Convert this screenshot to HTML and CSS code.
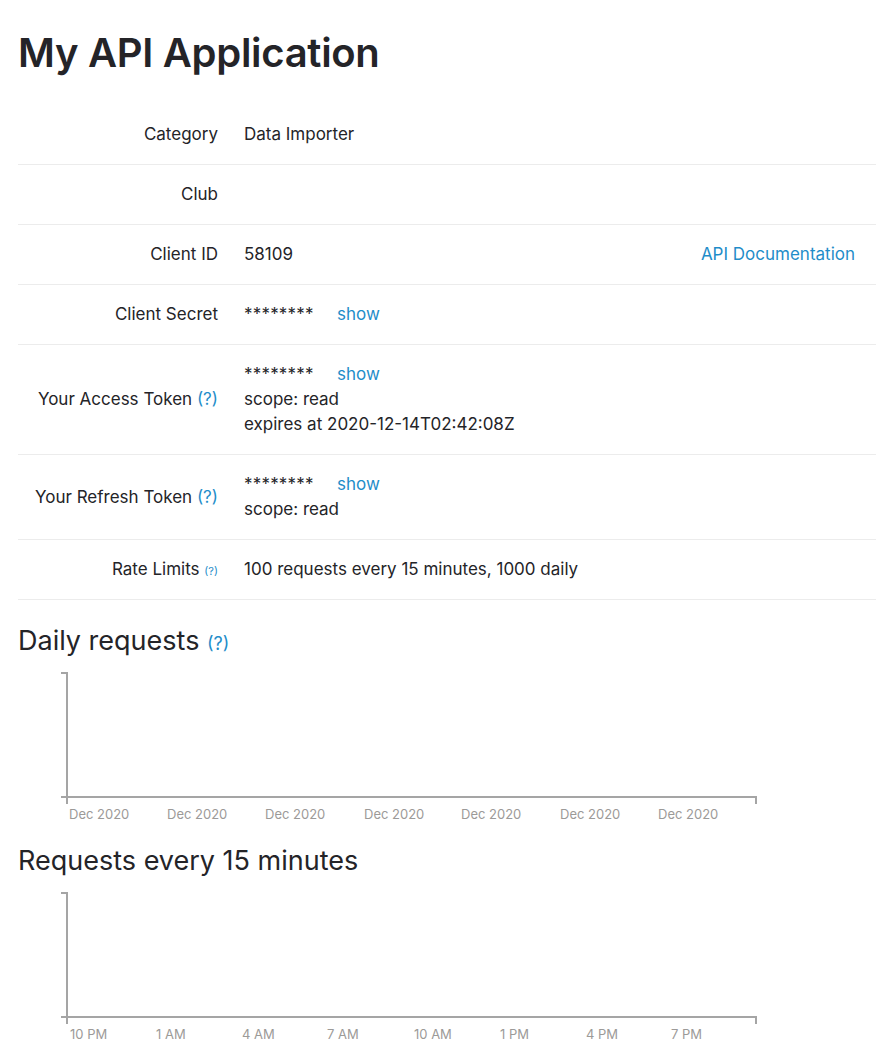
FILE: index.html
```html
<!DOCTYPE html>
<html lang="en">
<head>
<meta charset="utf-8">
<title>My API Application</title>
<link rel="stylesheet" href="styles.css">
</head>
<body>
<main class="page">
  <h1 class="title">My API Application</h1>

  <div class="details">
    <div class="row">
      <div class="label">Category</div>
      <div class="value">Data Importer</div>
    </div>
    <div class="row">
      <div class="label">Club</div>
      <div class="value"></div>
    </div>
    <div class="row">
      <div class="label">Client ID</div>
      <div class="value value-split"><span>58109</span><a class="link" href="#">API Documentation</a></div>
    </div>
    <div class="row">
      <div class="label">Client Secret</div>
      <div class="value"><span class="mask">********</span><a class="link show" href="#">show</a></div>
    </div>
    <div class="row">
      <div class="label">Your Access Token <a class="link" href="#">(?)</a></div>
      <div class="value">
        <div><span class="mask">********</span><a class="link show" href="#">show</a></div>
        <div>scope: read</div>
        <div>expires at 2020-12-14T02:42:08Z</div>
      </div>
    </div>
    <div class="row">
      <div class="label">Your Refresh Token <a class="link" href="#">(?)</a></div>
      <div class="value">
        <div><span class="mask">********</span><a class="link show" href="#">show</a></div>
        <div>scope: read</div>
      </div>
    </div>
    <div class="row">
      <div class="label">Rate Limits <a class="link small" href="#">(?)</a></div>
      <div class="value">100 requests every 15 minutes, 1000 daily</div>
    </div>
  </div>

  <h2 class="section-title first">Daily requests <a class="link help" href="#">(?)</a></h2>
  <svg class="chart" width="858" height="170" viewBox="0 0 858 170">
    <g class="axis">
      <line x1="49" y1="7" x2="49" y2="139"/>
      <line x1="43" y1="8" x2="49" y2="8"/>
      <line x1="43" y1="132" x2="739" y2="132"/>
      <line x1="738" y1="132" x2="738" y2="139"/>
    </g>
    <g class="tick-labels">
      <text x="51" y="154">Dec 2020</text>
      <text x="149" y="154">Dec 2020</text>
      <text x="247" y="154">Dec 2020</text>
      <text x="346" y="154">Dec 2020</text>
      <text x="443" y="154">Dec 2020</text>
      <text x="542" y="154">Dec 2020</text>
      <text x="640" y="154">Dec 2020</text>
    </g>
  </svg>

  <h2 class="section-title">Requests every 15 minutes</h2>
  <svg class="chart" width="858" height="170" viewBox="0 0 858 170">
    <g class="axis">
      <line x1="49" y1="7" x2="49" y2="139"/>
      <line x1="43" y1="8" x2="49" y2="8"/>
      <line x1="43" y1="132" x2="739" y2="132"/>
      <line x1="738" y1="132" x2="738" y2="139"/>
    </g>
    <g class="tick-labels">
      <text x="52" y="154">10 PM</text>
      <text x="138" y="154">1 AM</text>
      <text x="224" y="154">4 AM</text>
      <text x="309" y="154">7 AM</text>
      <text x="396" y="154">10 AM</text>
      <text x="482" y="154">1 PM</text>
      <text x="568" y="154">4 PM</text>
      <text x="653" y="154">7 PM</text>
    </g>
  </svg>
</main>
</body>
</html>
```

FILE: styles.css
```css
* { box-sizing: border-box; }

html, body {
  margin: 0;
  padding: 0;
  background: #ffffff;
}

body {
  font-family: Inter, "Noto Sans", "Liberation Sans", sans-serif;
  color: #242428;
  font-size: 17px;
  line-height: 25px;
}

.page {
  padding-left: 18px;
}

.title {
  margin: 0 0 28px 0;
  padding-top: 29px;
  font-size: 40px;
  line-height: 48px;
  font-weight: 600;
  letter-spacing: -0.3px;
  color: #242428;
}

.details {
  display: flex;
  flex-direction: column;
}

.row {
  display: grid;
  grid-template-columns: 213px 1fr;
  align-items: center;
  padding: 17px 0;
  border-bottom: 1px solid #ececec;
}

.label {
  text-align: right;
  padding-right: 13px;
}

.value {
  padding-left: 13px;
  padding-right: 21px;
  min-height: 25px;
}

.value-split {
  display: flex;
  justify-content: space-between;
}

.link {
  color: #1f8dc9;
  text-decoration: none;
}

.mask {
  display: inline-block;
  width: 69px;
  white-space: nowrap;
  letter-spacing: 0.2px;
}

.show {
  margin-left: 24px;
}

.small {
  font-size: 11px;
  line-height: 1;
}

.section-title {
  margin: 10px 0 8px 0;
  height: 32px;
  font-size: 27px;
  line-height: 32px;
  font-weight: 400;
  color: #242428;
}

.section-title.first {
  margin-top: 25px;
}

.help {
  font-size: 18px;
  line-height: 1;
}

.chart {
  display: block;
}

.axis line {
  stroke: #a5a5a5;
  stroke-width: 2;
}

.tick-labels text {
  font-family: Inter, "Noto Sans", "Liberation Sans", sans-serif;
  font-size: 13px;
  fill: #9c9a98;
}
```
